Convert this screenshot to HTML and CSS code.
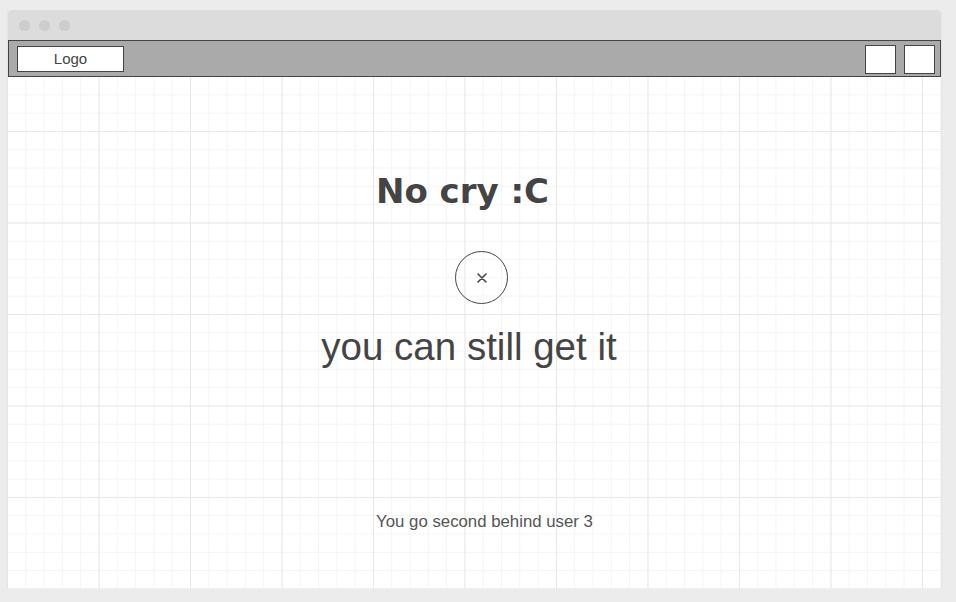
FILE: index.html
```html
<!DOCTYPE html>
<html lang="en">
<head>
<meta charset="utf-8">
<title>No cry</title>
<link rel="stylesheet" href="styles.css">
</head>
<body>
<div class="window">
  <div class="titlebar">
    <span class="dot"></span><span class="dot"></span><span class="dot"></span>
  </div>
  <div class="toolbar">
    <div class="logo">Logo</div>
    <div class="spacer"></div>
    <div class="tool-btn"></div>
    <div class="tool-btn"></div>
  </div>
  <main class="content">
    <h1 class="heading">No cry :C</h1>
    <div class="circle">
      <svg class="x-icon" width="10" height="10" viewBox="0 0 10 10"><path d="M1 1 L9 9 M9 1 L1 9" stroke="#444" stroke-width="1.6" fill="none" stroke-linecap="round"/></svg>
    </div>
    <p class="subtitle">you can still get it</p>
    <p class="footer-note">You go second behind user 3</p>
  </main>
</div>
</body>
</html>
```
FILE: styles.css
```css
html, body {
  margin: 0;
  padding: 0;
}
body {
  background: #ececec;
  font-family: "Liberation Sans", Arial, sans-serif;
  color: #444;
}
.window {
  margin: 10px 0 0 8px;
  width: 933px;
  box-shadow: 0 1px 2px rgba(0, 0, 0, 0.08);
}
.titlebar {
  height: 30px;
  background: #dcdcdc;
  border-radius: 4px 4px 0 0;
  display: flex;
  align-items: center;
  gap: 9px;
  padding-left: 11px;
  box-sizing: border-box;
}
.dot {
  width: 11px;
  height: 11px;
  border-radius: 50%;
  background: #cdcdcd;
}
.toolbar {
  height: 37px;
  box-sizing: border-box;
  border: 1px solid #444;
  background: #aaaaaa;
  display: flex;
  align-items: center;
  padding: 0 5px 0 8px;
  gap: 8px;
}
.logo {
  width: 107px;
  height: 26px;
  box-sizing: border-box;
  border: 1px solid #444;
  background: #fff;
  font-size: 15px;
  line-height: 24px;
  text-align: center;
  color: #444;
}
.spacer {
  flex: 1;
}
.tool-btn {
  width: 31px;
  height: 29px;
  box-sizing: border-box;
  border: 1px solid #444;
  background: #fff;
  margin-top: 1px;
}
.content {
  height: 512px;
  background-color: #fff;
  background-image:
    linear-gradient(to right, #e8e8e8 1px, transparent 1px),
    linear-gradient(to bottom, #e8e8e8 1px, transparent 1px),
    linear-gradient(to right, #f4f4f4 1px, transparent 1px),
    linear-gradient(to bottom, #f4f4f4 1px, transparent 1px);
  background-size: 91.5px 100%, 100% 91.5px, 18.3px 100%, 100% 18.3px;
  background-position: -1px 0, 0 -37.5px, -1px 0, 0 -37.5px;
  display: flex;
  flex-direction: column;
  align-items: center;
}
.heading {
  margin: 94px 24px 0 0;
  font-family: "DejaVu Sans", sans-serif;
  font-weight: bold;
  font-size: 34px;
  line-height: 40px;
  color: #444;
}
.circle {
  margin: 40px 0 0 14px;
  width: 53px;
  height: 53px;
  box-sizing: border-box;
  border: 1px solid #444;
  border-radius: 50%;
  display: flex;
  align-items: center;
  justify-content: center;
}
.subtitle {
  margin: 21px 11px 0 0;
  font-size: 38.5px;
  line-height: 44px;
  color: #444;
}
.footer-note {
  margin: 143px 0 0 20px;
  font-size: 16.8px;
  line-height: 20px;
  color: #555;
}
```
